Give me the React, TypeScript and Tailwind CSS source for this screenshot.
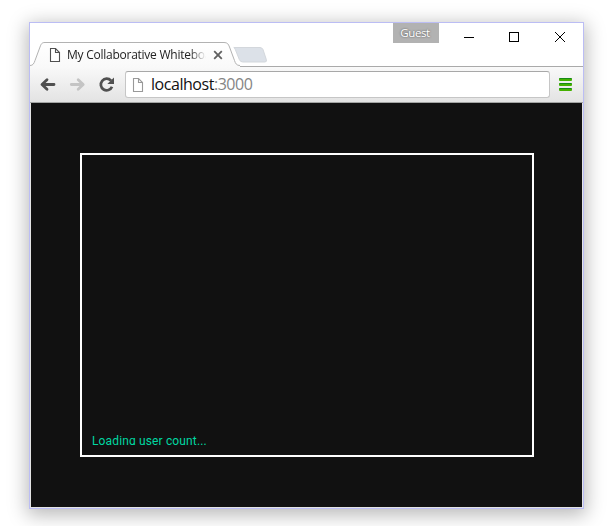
import React from "react";

function PageIcon({ className }: { className: string }) {
  return (
    <svg className={className} viewBox="0 0 12 16" fill="#fff" stroke="currentColor" strokeWidth="1.1">
      <path d="M1.500 1.500h5l4 4v9h-9z" />
      <path d="M6.500 1.500v4h4" fill="none" />
    </svg>
  );
}

function TitleBar() {
  return (
    <div className="relative h-[43px] bg-white">
      <div className="flex h-full items-start justify-end">
        <div className="mr-[18px] h-5 w-[46px] bg-[#b2b2b2] pr-[2px] text-center text-[11.5px] leading-[20px] font-medium tracking-[-0.4px] text-white [text-shadow:0_0_2px_#444]">
          Guest
        </div>
        <svg className="h-7 w-[126px]" viewBox="0 0 126 28" fill="none" stroke="#000" shapeRendering="crispEdges">
          <path d="M7 14.5h10M52.500 9.500h9v9h-9z" />
          <path d="M98 9l10 10M108 9l-10 10" shapeRendering="auto" />
        </svg>
      </div>
      <div className="absolute top-[19px] left-0 h-6 w-[240px]">
        <svg className="absolute inset-0 h-[25px] w-[240px] overflow-visible" viewBox="0 0 240 25" fill="none">
          <defs>
            <linearGradient id="tab" x1="0" y1="0" x2="0" y2="1">
              <stop offset="0" stopColor="#fff" />
              <stop offset="1" stopColor="#f9f9f9" />
            </linearGradient>
          </defs>
          <path d="M206 5.500h24q2 0 3 2l3.300 10q.8 2.500-1.500 2.500h-22q-2.500 0-3.500-2.500l-4-10q-.8-2-1.500-2z" fill="#dce1e8" stroke="#d3d7dc" />
          <path d="M0 25v-1.500c4 0 4.500-2 5.500-5L10 5c1.300-3.500 2-4.500 5-4.500h179c3.500 0 4.300 1.500 5.500 4.500l5 13.500c1 3 2 5 5.500 5V25z" fill="url(#tab)" />
          <path d="M0 23.500c3 0 4-2 5-5L10 5c1.300-3.500 2-4.500 5-4.500h179c3.500 0 4.300 1.500 5.500 4.500l5 13.500c1 3 2 5 5.500 5" stroke="#b2b2b2" />
        </svg>
        <div className="relative flex h-full items-center pt-[2px] pl-[19px]">
          <PageIcon className="h-4 w-3 text-[#505050]" />
          <div className="ml-[6px] w-[139px] overflow-hidden whitespace-nowrap text-[12px] tracking-[-0.25px] text-[#222] [mask-image:linear-gradient(to_right,black_88%,transparent)]">
            My Collaborative Whiteboard
          </div>
          <svg className="ml-[7px] h-[10px] w-[10px]" viewBox="0 0 10 10" stroke="#606060" strokeWidth="1.8">
            <path d="M1.200 1.200l7.600 7.600M8.800 1.200l-7.600 7.600" />
          </svg>
        </div>
      </div>
    </div>
  );
}

function Toolbar() {
  return (
    <div className="flex h-[37px] items-start border-t border-b border-t-[#aaa] border-b-[#a3a5a4] bg-linear-to-b from-[#f9f9f9] to-[#e3e3e3] pt-1">
      <svg className="ml-[9px] h-[28px] w-[78px]" viewBox="0 0 78 28" fill="none" strokeWidth="2.8" strokeLinecap="round" strokeLinejoin="round">
        <path d="M15 13.500H3.500M8 8.800l-5 4.700 5 4.700" stroke="#505050" />
        <path d="M32.300 13.500h11.400M39.200 8.800l5 4.700-5 4.700" stroke="#c4c4c4" />
        <path d="M72 9.700a5.800 5.800 0 1 0 1 6" stroke="#505050" strokeWidth="2.700" strokeLinecap="butt" />
        <path d="M75 6.500v6.500h-6.700z" fill="#505050" />
      </svg>
      <div className="ml-[8px] flex h-[27px] w-[425px] items-center rounded-[3px] border border-[#c6c6c6] border-t-[#a8a8a8] bg-white">
        <PageIcon className="ml-[6px] h-4 w-3 text-[#999]" />
        <div className="ml-[7px] text-[16px] leading-[25px] tracking-[-0.46px] text-[#111]">
          localhost<span className="text-[#858585]">:3000</span>
        </div>
      </div>
      <div className="mt-[7px] ml-[9px] flex flex-col gap-[2px]">
        {[0, 1, 2].map((i) => (
          <div key={i} className="h-[3px] w-[13px] rounded-[1px] border-t border-[#168b16] bg-[#45b000]" />
        ))}
      </div>
    </div>
  );
}

export default function App() {
  return (
    <div className="h-[526px] w-[608px] overflow-hidden bg-white pt-[22px] pl-[29px] font-['Open_Sans','Noto_Sans',sans-serif]">
      <div className="h-[487px] w-[555px] border border-[#bbbdf4] bg-[#e4e4e4] shadow-[0_4px_18px_2px_rgba(0,0,0,0.28)]">
        <TitleBar />
        <Toolbar />
        <div className="mx-px h-[404px] bg-[#111] px-[49px] pt-[50px]">
          <div className="flex h-[304px] w-[454px] items-end border-2 border-white p-[10px]">
            <div className="h-[12px] overflow-hidden font-[Roboto,Arial,sans-serif] text-[12px] leading-[16px] tracking-[0.14px] text-[#00d8a2]">
              Loading user count...
            </div>
          </div>
        </div>
      </div>
    </div>
  );
}
